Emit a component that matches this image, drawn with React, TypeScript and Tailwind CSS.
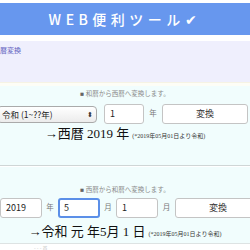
import React from 'react';

const jp = { fontFamily: '"Noto Sans CJK JP", "Noto Sans", sans-serif' };
const serif = { fontFamily: '"Liberation Serif", "Noto Sans CJK JP", serif' };

const Note: React.FC<{ text: string }> = ({ text }) => (
  <p className="text-center text-[6.5px] leading-[10px] text-[#8a8a8a]" style={serif}>
    <span className="text-[#666]">■</span> {text}
  </p>
);

const Field: React.FC<{ value: string; focused?: boolean; width: string }> = ({ value, focused, width }) => (
  <div
    className={`${width} h-[20px] shrink-0 flex items-center bg-white rounded-[3px] text-[9px] text-[#222] ${
      focused ? 'border-2 border-[#5b8fe8] pl-[4px]' : 'border border-[#c4c4c4] pl-[5px]'
    }`}
    style={jp}
  >
    {value}
  </div>
);

const Unit: React.FC<{ label: string; width: string }> = ({ label, width }) => (
  <span className={`${width} shrink-0 text-center text-[7.5px] text-[#777]`} style={serif}>
    {label}
  </span>
);

const ConvertButton: React.FC = () => (
  <div
    className="w-[86px] h-[20px] shrink-0 flex items-center justify-center bg-white border border-[#c4c4c4] rounded-[3px] text-[9px] text-[#333]"
    style={jp}
  >
    変換
  </div>
);

const Result: React.FC<{ children: React.ReactNode }> = ({ children }) => (
  <p className="text-center text-[13px] leading-[16px] text-[#111] whitespace-nowrap" style={serif}>
    {children}
    <span className="text-[6px] text-[#333] ml-[3px]">(*2019年05月01日より令和)</span>
  </p>
);

const App: React.FC = () => {
  return (
    <div className="w-[250px] h-[250px] overflow-hidden bg-white pt-[3px]">
      <header className="h-[32px] bg-[#6797ee] flex items-center justify-center">
        <h1 className="text-white text-[14px] tracking-[4.5px] font-medium" style={jp}>
          WEB便利ツール✔
        </h1>
      </header>

      <nav className="mt-[6px] h-[41px] bg-[#efeffd] pt-[5px]">
        <a className="block text-[7px] leading-[9px] text-[#6363c0]" style={jp}>
          暦変換
        </a>
      </nav>

      <div className="h-[4px] bg-[#fdfdf6] border-t border-[#f6f3e4]" />

      <section className="bg-[#f1fdfd] h-[80px] border-b border-[#cfd6d6] pt-[3px]">
        <Note text="和暦から西暦へ変換します。" />
        <div className="flex items-center mt-[5px]">
          <div
            className="w-[100px] -ml-[3px] h-[17px] shrink-0 flex items-center justify-between bg-gradient-to-b from-white to-[#ececec] border border-[#aaa] rounded-[4px] pl-[4px] pr-[3px] text-[8.5px] text-[#222]"
            style={jp}
          >
            <span>令和 (1~??年)</span>
            <span className="text-[7px] leading-none text-[#333]">⬍</span>
          </div>
          <span className="w-[7px] shrink-0" />
          <Field value="1" width="w-[40px]" />
          <Unit label="年" width="w-[18px]" />
          <ConvertButton />
        </div>
        <div className="mt-[2px]">
          <Result>→西暦 2019 年</Result>
        </div>
      </section>

      <section className="bg-[#f1fdfd] h-[77px] mt-[1px] border-b border-[#dde3e3] pt-[18px]">
        <Note text="西暦から和暦へ変換します。" />
        <div className="flex items-center mt-[3px]">
          <Field value="2019" width="w-[42px]" />
          <Unit label="年" width="w-[16px]" />
          <Field value="5" width="w-[42px]" focused />
          <Unit label="月" width="w-[16px]" />
          <Field value="1" width="w-[42px]" />
          <Unit label="月" width="w-[17px]" />
          <ConvertButton />
        </div>
        <div className="mt-[6px]">
          <Result>→令和 元 年5月 1 日</Result>
        </div>
      </section>

      <p className="pl-[34px] pt-[1px] text-[5px] text-[#c4c4c4] leading-[5px]" style={jp}>
        - - - 首
      </p>
    </div>
  );
};

export default App;
